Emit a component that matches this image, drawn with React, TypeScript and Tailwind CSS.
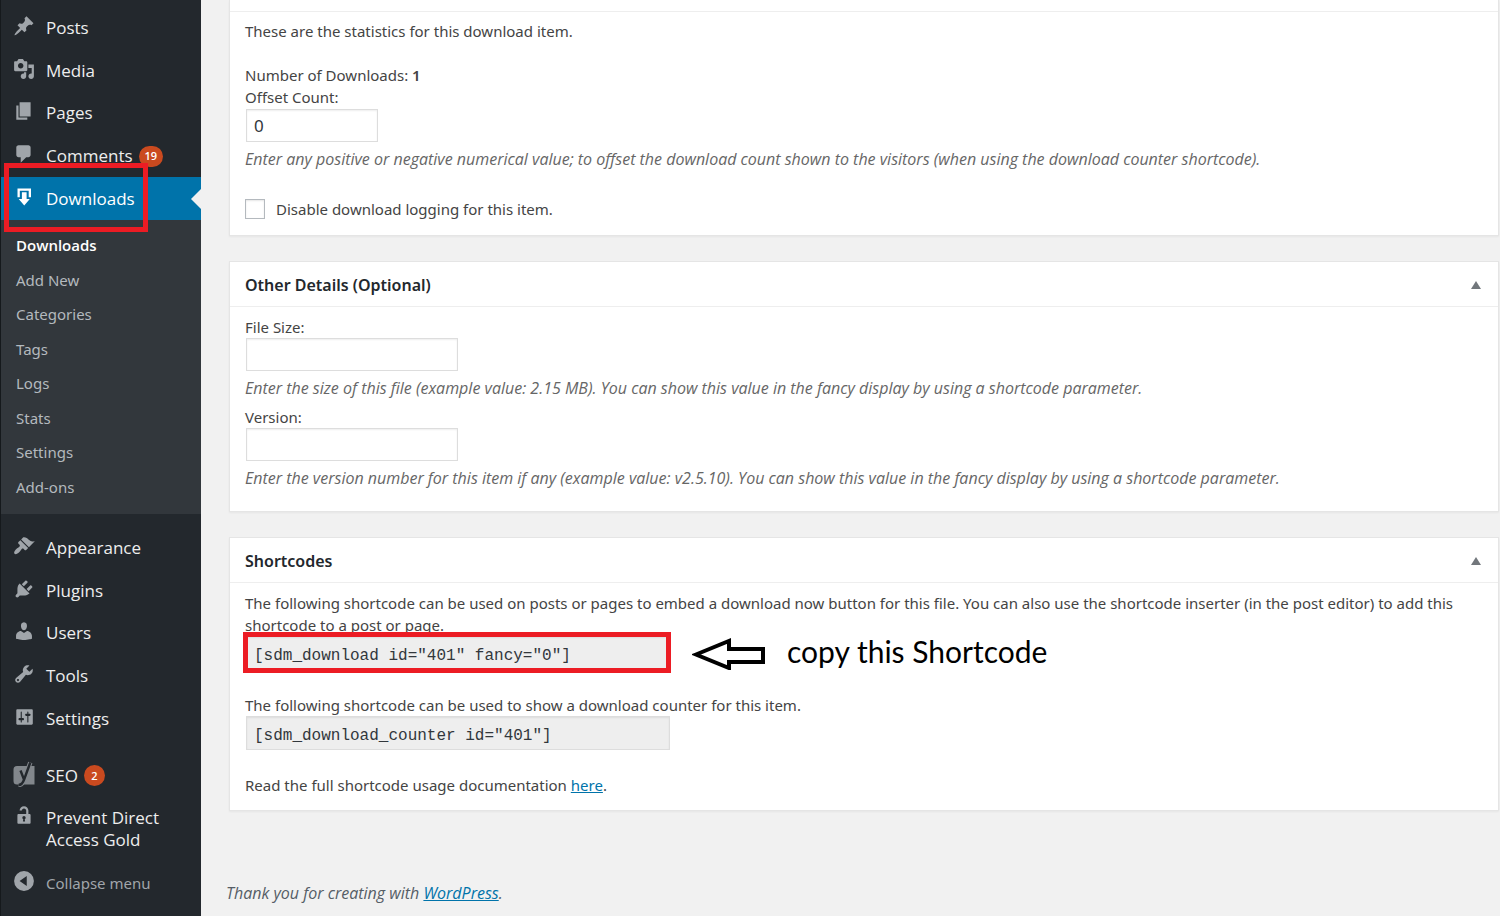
import React from 'react';

interface MenuEntry {
  id: string;
  name: string;
  icon: React.ReactNode;
  count?: number;
}

const Dashicon: React.FC<{ d: string }> = ({ d }) => (
  <svg viewBox="0 0 20 20" className="h-[22px] w-[22px] fill-current" aria-hidden="true">
    <path fillRule="evenodd" d={d} />
  </svg>
);

const DownloadIcon = () => (
  <svg viewBox="0 0 22 22" className="h-[22px] w-[22px] fill-white" aria-hidden="true">
    <path d="M4.500 2.500h13.500v8.700h-2.300V4.700H6.800v6.500H4.500z" />
    <path d="M8.900 6.300h4.700v6.700h3.200L11.250 19.500 5.700 13h3.200z" />
  </svg>
);

const YoastIcon = () => (
  <svg viewBox="0 0 22 26" className="h-[26px] w-[22px]" aria-hidden="true">
    <path d="M4 5h17.500v18.500H4A3.500 3.500 0 0 1 .5 20V8.500A3.500 3.500 0 0 1 4 5z" fill="#82878c" />
    <path d="M7.500 9.500l3.300 8.500M17.300 1.500l-6 16.500q-2 6-5.800 6" fill="none" stroke="#82878c" strokeWidth="4.500" />
    <path d="M7.500 9.500l3.300 8.500M17.300 1.500l-6 16.500q-2 6-5.800 6" fill="none" stroke="#23282d" strokeWidth="2.400" />
  </svg>
);

const contentMenu: MenuEntry[] = [
  {
    id: 'posts',
    name: 'Posts',
    icon: <Dashicon d="M10.44 3.02l1.82-1.82 6.36 6.35-1.83 1.82c-1.05-.68-2.48-.57-3.41.36l-.75.75c-.92.93-1.04 2.35-.35 3.41l-1.83 1.82-2.41-2.41-2.8 2.79c-.42.42-3.38 2.71-3.8 2.29s1.86-3.39 2.28-3.81l2.79-2.79L4.1 9.36l1.83-1.82c1.05.69 2.48.57 3.4-.36l.75-.75c.93-.92 1.05-2.35.36-3.41z" />,
  },
  {
    id: 'media',
    name: 'Media',
    icon: <Dashicon d="M13 11V4c0-.55-.45-1-1-1h-1.67L9 1H5L3.67 3H2c-.55 0-1 .45-1 1v7c0 .55.45 1 1 1h10c.55 0 1-.45 1-1zM7 4.5c1.38 0 2.5 1.12 2.5 2.5S8.38 9.5 7 9.5 4.5 8.38 4.5 7 5.62 4.5 7 4.5zM14 6h5v10.5c0 1.38-1.12 2.5-2.5 2.5S14 17.88 14 16.5s1.12-2.5 2.5-2.5c.17 0 .34.02.5.05V9h-3V6zm-4 8.05V13h2v3.5c0 1.38-1.12 2.5-2.5 2.5S7 17.88 7 16.5 8.12 14 9.500 14c.17 0 .34.02.5.05z" />,
  },
  { id: 'pages', name: 'Pages', icon: <Dashicon d="M6 15V2h10v13H6zm-1 1h8v2H3V5h2v11z" /> },
  {
    id: 'comments',
    name: 'Comments',
    icon: <Dashicon d="M5 2h9c1.1 0 2 .9 2 2v7c0 1.1-.9 2-2 2h-2l-5 5v-5H5c-1.1 0-2-.9-2-2V4c0-1.1.9-2 2-2z" />,
    count: 19,
  },
];

const downloadsSubmenu = ['Downloads', 'Add New', 'Categories', 'Tags', 'Logs', 'Stats', 'Settings', 'Add-ons'];

const adminMenu: MenuEntry[] = [
  {
    id: 'appearance',
    name: 'Appearance',
    icon: <Dashicon d="M14.48 11.06L7.41 3.99l1.5-1.5c.5-.56 2.3-.47 3.51.32 1.21.8 1.43 1.28 2.91 2.1 1.18.64 2.45 1.26 4.45.85zm-.71.71L6.7 4.7 4.93 6.47c-.39.39-.39 1.02 0 1.41l1.06 1.06c.39.39.39 1.03 0 1.42-.6.6-1.43 1.11-2.21 1.69-.35.26-.7.53-1.01.84C1.43 14.23.4 16.08 1.4 17.07c.99 1 2.84-.03 4.18-1.36.31-.31.58-.66.85-1.02.57-.78 1.08-1.61 1.69-2.21.39-.39 1.02-.39 1.41 0l1.06 1.06c.39.39 1.02.39 1.41 0z" />,
  },
  {
    id: 'plugins',
    name: 'Plugins',
    icon: <Dashicon d="M13.11 4.36L9.87 7.6 8 5.73l3.24-3.24c.35-.34 1.05-.2 1.56.32.52.51.66 1.21.31 1.55zm-8 1.77l.91-1.12 9.01 9.01-1.19.84c-.71.71-2.63 1.16-3.82 1.16H6.14L4.9 17.26c-.59.59-1.54.59-2.12 0-.59-.58-.59-1.53 0-2.12l1.24-1.24v-3.88c0-1.13.4-3.19 1.09-3.89zm7.26 3.97l3.24-3.24c.34-.35 1.04-.21 1.55.31.52.51.66 1.21.31 1.55l-3.24 3.25z" />,
  },
  {
    id: 'users',
    name: 'Users',
    icon: <Dashicon d="M10 9.25c-2.27 0-2.73-3.44-2.73-3.44C7 4.02 7.82 2 9.97 2c2.16 0 2.98 2.02 2.71 3.81 0 0-.41 3.44-2.68 3.44zm0 2.57L12.72 10c2.39 0 4.52 2.33 4.52 4.53v2.49s-3.65 1.13-7.24 1.13c-3.65 0-7.24-1.13-7.24-1.13v-2.49c0-2.25 1.94-4.48 4.47-4.48z" />,
  },
  {
    id: 'tools',
    name: 'Tools',
    icon: <Dashicon d="M16.68 9.77c-1.34 1.34-3.3 1.67-4.95.99l-5.41 6.52c-.99.99-2.59.99-3.58 0s-.99-2.59 0-3.57l6.52-5.42c-.68-1.65-.35-3.61.99-4.95 1.28-1.28 3.12-1.62 4.72-1.06l-2.89 2.89 2.82 2.82 2.86-2.87c.53 1.58.18 3.39-1.08 4.65zM3.81 16.21c.4.39 1.04.39 1.43 0 .4-.4.4-1.04 0-1.43-.39-.4-1.03-.4-1.43 0-.39.39-.39 1.03 0 1.43z" />,
  },
  {
    id: 'settings',
    name: 'Settings',
    icon: <Dashicon d="M18 16V4c0-.55-.45-1-1-1H4c-.55 0-1 .45-1 1v12c0 .55.45 1 1 1h13c.55 0 1-.45 1-1zM8 11h1c.55 0 1 .45 1 1s-.45 1-1 1H8v1.5c0 .28-.22.5-.5.5s-.5-.22-.5-.5V13H6c-.55 0-1-.45-1-1s.45-1 1-1h1V5.500c0-.28.22-.5.5-.5s.5.22.5.5V11zm5-2h-1c-.55 0-1-.45-1-1s.45-1 1-1h1V5.500c0-.28.22-.5.5-.5s.5.22.5.5V7h1c.55 0 1 .45 1 1s-.45 1-1 1h-1v5.500c0 .28-.22.5-.5.5s-.5-.22-.5-.5V9z" />,
  },
];

const CountBadge: React.FC<{ count: number }> = ({ count }) => (
  <span className="flex h-[21px] min-w-[21px] items-center justify-center rounded-full bg-[#ca4a1f] px-[6px] text-[11px] font-semibold text-white">
    {count}
  </span>
);

const MenuLink: React.FC<{ entry: MenuEntry }> = ({ entry }) => (
  <a href={`#${entry.id}`} className="flex items-center text-[17px] leading-[22px] text-[#eee]">
    <span className="flex w-[45px] justify-center pb-1 text-[#a0a5aa]">{entry.icon}</span>
    <span>{entry.name}</span>
    {entry.count && (
      <span className="ml-[6px]">
        <CountBadge count={entry.count} />
      </span>
    )}
  </a>
);

const Sidebar = () => (
  <nav
    className="w-[201px] shrink-0 border-l border-[#15191c] bg-[#23282d] pt-[7px] font-['Open_Sans','Noto_Sans',sans-serif]"
    aria-label="Main menu"
  >
    <div className="grid h-[213px] auto-rows-fr">
      {contentMenu.map((entry) => (
        <MenuLink key={entry.id} entry={entry} />
      ))}
      <a href="#downloads" className="relative flex items-center bg-[#0073aa] text-[17px] leading-[22px] text-white">
        <span className="flex w-[45px] justify-center pb-1">
          <DownloadIcon />
        </span>
        <span>Downloads</span>
        <span className="absolute right-0 top-1/2 -mt-[10px] border-y-[10px] border-r-[10px] border-y-transparent border-r-[#f1f1f1]" />
        <span className="absolute -bottom-3 -top-[14px] left-[3px] z-10 w-36 border-[5px] border-[#ec1c24]" />
      </a>
    </div>

    <div className="bg-[#32373c] pb-[10px] pt-2">
      <ul className="grid h-[276px] auto-rows-fr">
        {downloadsSubmenu.map((name, index) => (
          <li key={name} className="flex items-center pl-[15px]">
            <a
              href={`#sub-${index}`}
              className={
                index === 0
                  ? 'text-[15px] font-semibold text-white'
                  : "font-['Noto_Sans',sans-serif] text-[15px] text-[#b4b9be]"
              }
            >
              {name}
            </a>
          </li>
        ))}
      </ul>
    </div>

    <div className="mt-[13px] grid h-[213px] auto-rows-fr">
      {adminMenu.map((entry) => (
        <MenuLink key={entry.id} entry={entry} />
      ))}
    </div>

    <div className="mt-[14px] flex h-[43px]">
      <MenuLink entry={{ id: 'seo', name: 'SEO', icon: <YoastIcon />, count: 2 }} />
    </div>
    <a href="#pda" className="flex items-start py-[10px] text-[17px] leading-[22px] text-[#eee]">
      <span className="-mt-[3px] flex w-[45px] shrink-0 justify-center text-[#a0a5aa]">
        <Dashicon d="M12 9V6c0-1.1-.9-2-2-2s-2 .9-2 2H6c0-2.21 1.79-4 4-4s4 1.79 4 4v3h1c.55 0 1 .45 1 1v7c0 .55-.45 1-1 1H5c-.55 0-1-.45-1-1v-7c0-.55.45-1 1-1h7zm-1 7l-.36-2.15c.51-.24.86-.75.86-1.35 0-.83-.67-1.5-1.5-1.5s-1.5.67-1.5 1.5c0 .6.35 1.11.86 1.35L9 16h2z" />
      </span>
      <span className="w-[130px]">Prevent Direct Access Gold</span>
    </a>
    <button type="button" className="flex h-[43px] items-center font-['Noto_Sans',sans-serif] text-[15px] text-[#a0a5aa]">
      <span className="flex w-[45px] justify-center pb-1">
        <Dashicon d="M10 1a9 9 0 1 0 0 18 9 9 0 0 0 0-18zM6 10l6.500-4.500v9z" />
      </span>
      <span>Collapse menu</span>
    </button>
  </nav>
);

const Postbox: React.FC<{ title: string; children: React.ReactNode }> = ({ title, children }) => (
  <section className="mb-[25px] border border-[#e5e5e5] bg-white shadow-xs">
    <header className="flex h-[45px] items-center justify-between border-b border-[#eee] pl-[15px] pr-[17px] pt-px">
      <h2 className="text-[16px] font-semibold text-[#23282d]">{title}</h2>
      <button type="button" aria-label={`Toggle panel: ${title}`}>
        <svg viewBox="0 0 10 8" className="h-2 w-[10px] fill-[#72777c]" aria-hidden="true">
          <path d="M5 0l5 8H0z" />
        </svg>
      </button>
    </header>
    {children}
  </section>
);

const Description: React.FC<{ children: React.ReactNode }> = ({ children }) => (
  <p className="mt-[6px] font-['Open_Sans','Noto_Sans',sans-serif] text-[16px] leading-[22px] italic text-[#666]">
    {children}
  </p>
);

const fieldClass =
  'block h-[33px] border border-[#ddd] bg-white px-[7px] text-[17px] text-[#32373c] shadow-[inset_0_1px_2px_rgba(0,0,0,0.07)] outline-none ml-px';
const codeClass =
  "block h-[34px] w-[424px] border border-[#ddd] bg-[#eee] px-[7px] pt-[6px] font-['Liberation_Mono',monospace] text-[16px] text-[#32373c] shadow-[inset_0_1px_2px_rgba(0,0,0,0.07)] outline-none ml-px";

export default function App() {
  return (
    <div className="flex min-h-screen bg-[#f1f1f1] font-['Noto_Sans','Open_Sans',sans-serif] text-[15px] leading-[22px] text-[#444]">
      <Sidebar />

      <main className="min-w-0 flex-1 pl-[28px] pr-px">
        <section className="mb-[25px] border border-t-0 border-[#e5e5e5] bg-white shadow-xs">
          <div className="h-3 border-b border-[#eee]" />
          <div className="px-[15px] pb-[15px] pt-2">
            <p>These are the statistics for this download item.</p>
            <p className="mt-[22px]">
              Number of Downloads: <strong className="font-semibold">1</strong>
            </p>
            <label htmlFor="offset" className="block">
              Offset Count:
            </label>
            <input id="offset" type="text" defaultValue="0" className={`${fieldClass} mt-px w-[132px]`} />
            <Description>
              Enter any positive or negative numerical value; to offset the download count shown to the visitors (when
              using the download counter shortcode).
            </Description>
            <div className="mt-7 flex items-center">
              <input
                id="disable-logging"
                type="checkbox"
                className="h-5 w-5 appearance-none border border-[#b4b9be] bg-white shadow-[inset_0_1px_2px_rgba(0,0,0,0.1)]"
              />
              <label htmlFor="disable-logging" className="ml-[11px]">
                Disable download logging for this item.
              </label>
            </div>
          </div>
        </section>

        <Postbox title="Other Details (Optional)">
          <div className="px-[15px] pb-[22px] pt-[9px]">
            <label htmlFor="file-size" className="block">
              File Size:
            </label>
            <input id="file-size" type="text" className={`${fieldClass} w-[212px]`} />
            <Description>
              Enter the size of this file (example value: 2.15 MB). You can show this value in the fancy display by
              using a shortcode parameter.
            </Description>
            <label htmlFor="version" className="mt-[7px] block">
              Version:
            </label>
            <input id="version" type="text" className={`${fieldClass} w-[212px]`} />
            <Description>
              Enter the version number for this item if any (example value: v2.5.10). You can show this value in the
              fancy display by using a shortcode parameter.
            </Description>
          </div>
        </Postbox>

        <Postbox title="Shortcodes">
          <div className="px-[15px] pb-[14px] pt-[9px]">
            <label htmlFor="shortcode" className="block">
              The following shortcode can be used on posts or pages to embed a download now button for this file. You
              can also use the shortcode inserter (in the post editor) to add this shortcode to a post or page.
            </label>
            <div className="flex h-[34px] items-center">
              <div className="relative">
                <input
                  id="shortcode"
                  type="text"
                  readOnly
                  value={'[sdm_download id="401" fancy="0"]'}
                  className={codeClass}
                />
                <span className="pointer-events-none absolute -bottom-[3px] -left-[2px] -right-px -top-1 border-[5px] border-[#ec1c24]" />
              </div>
              <svg viewBox="0 0 74 34" className="ml-[22px] h-[34px] w-[74px] shrink-0" aria-hidden="true">
                <path
                  d="M4 18.500L37 5v8h34v13H37v6z"
                  fill="#fff"
                  stroke="#000"
                  strokeWidth="4"
                />
              </svg>
              <span className="ml-[21px] whitespace-nowrap pb-1 font-['Lato',sans-serif] text-[30px] text-black">
                copy this Shortcode
              </span>
            </div>

            <label htmlFor="counter-shortcode" className="mt-6 block">
              The following shortcode can be used to show a download counter for this item.
            </label>
            <input
              id="counter-shortcode"
              type="text"
              readOnly
              value={'[sdm_download_counter id="401"]'}
              className={codeClass}
            />
            <p className="mt-6">
              Read the full shortcode usage documentation{' '}
              <a href="#docs" className="text-[#0073aa] underline">
                here
              </a>
              .
            </p>
          </div>
        </Postbox>

        <footer className="-ml-[3px] mt-[71px] font-['Open_Sans','Noto_Sans',sans-serif] text-[16px] leading-[22px] italic text-[#555d66]">
          Thank you for creating with{' '}
          <a href="#wordpress" className="text-[#0073aa] underline">
            WordPress
          </a>
          .
        </footer>
      </main>
    </div>
  );
}
